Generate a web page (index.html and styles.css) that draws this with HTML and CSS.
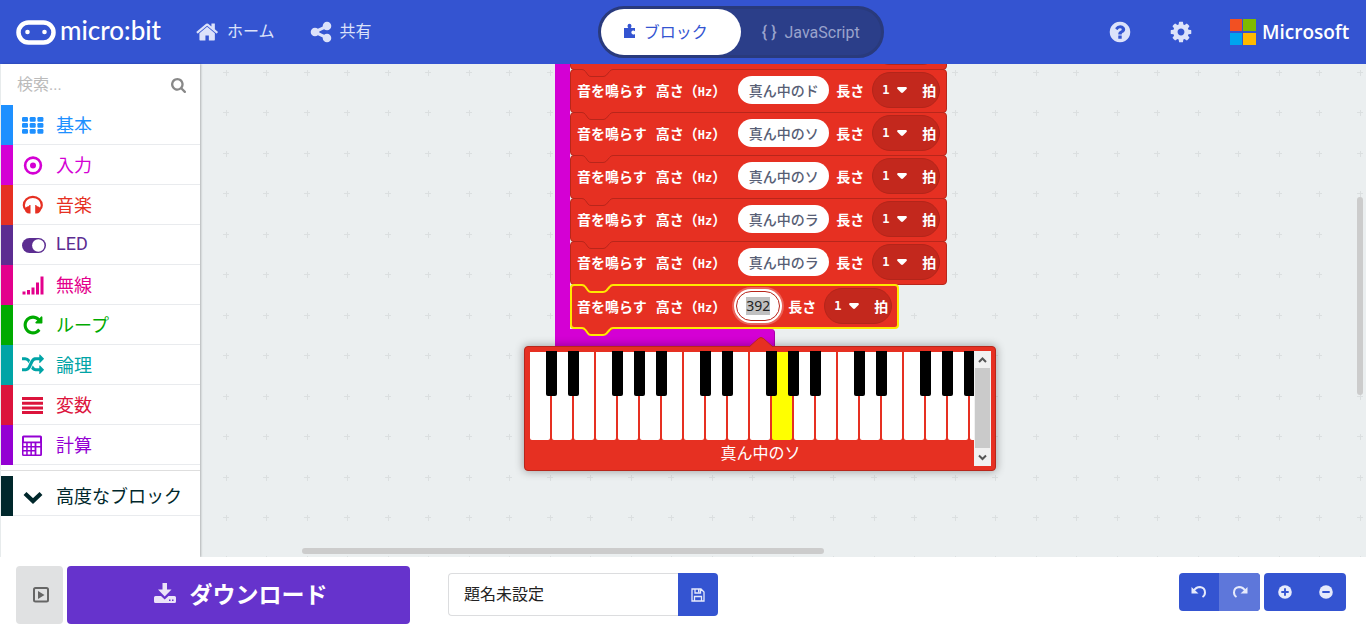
FILE: index.html
```html
<!DOCTYPE html>
<html lang="ja">
<head>
<meta charset="utf-8">
<meta name="viewport" content="width=device-width, initial-scale=1">
<title>micro:bit</title>
<link rel="stylesheet" href="styles.css">
</head>
<body>
<svg class="defs" aria-hidden="true">
  <symbol id="notch" viewBox="0 0 31 9"><path class="notch-fill" d="M0 0H31V1Q29 1 27.500 3L24.500 6.500Q23 8 21 8H9Q7 8 6 6.500L3.500 3Q2 1 0 1Z"/><path class="notch-line" d="M0 .5Q2 .5 3.500 2.500L6 6Q7 7.500 9 7.500H21Q23 7.500 24.500 6L27.500 2.500Q29 .5 31 .5"/></symbol>
  <symbol id="notch-selected" viewBox="0 0 31 10"><path class="notch-fill" d="M0 0H31V2L24 8H8L0 2Z"/><path fill="none" stroke="#ffe800" stroke-width="2" d="M0 1Q2 1 3.500 3L6 6.500Q7 8 9 8H21Q23 8 24.500 6.500L27.500 3Q29 1 31 1"/></symbol>
  <symbol id="caret" viewBox="0 0 10 6"><path fill="#fff" d="M1 0H9Q10.500 .5 9.500 2L6 5.500Q5 6.300 4 5.500L.5 2Q-.5 .5 1 0Z"/></symbol>
</svg>

<header class="topbar">
  <nav class="nav">
    <a class="brand" href="#">
      <svg width="40" height="25" viewBox="0 0 40 25" aria-hidden="true"><rect x="2.500" y="2.500" width="35" height="20" rx="10" fill="none" stroke="#fff" stroke-width="4.500"/><circle cx="11.500" cy="12" r="2.300" fill="#fff"/><circle cx="28.500" cy="12" r="2.300" fill="#fff"/></svg>
      <span>micro:bit</span>
    </a>
    <a class="nav-item" href="#">
      <svg width="24" height="24" viewBox="0 0 1792 1792" aria-hidden="true"><path fill="currentColor" d="M1408 992v480q0 26-19 45t-45 19h-384v-384h-256v384h-384q-26 0-45-19t-19-45v-480q0-1 .5-3t.5-3l575-474 575 474q1 2 1 6zm223-69l-62 74q-8 9-21 11h-3q-13 0-21-7l-692-577-692 577q-12 8-24 7-13-2-21-11l-62-74q-8-10-7-23.500t11-21.500l719-599q32-26 76-26t76 26l244 204v-195q0-14 9-23t23-9h192q14 0 23 9t9 23v408l219 182q10 8 11 21.500t-7 23.500z"/></svg>
      ホーム
    </a>
    <a class="nav-item" href="#">
      <svg width="24" height="24" viewBox="0 0 1792 1792" aria-hidden="true"><path fill="currentColor" d="M1344 1024q133 0 226.500 93.500t93.500 226.500-93.500 226.500-226.500 93.500-226.500-93.500-93.500-226.500q0-12 2-34l-360-180q-92 86-218 86-133 0-226.500-93.500t-93.500-226.500 93.500-226.500 226.500-93.500q126 0 218 86l360-180q-2-22-2-34 0-133 93.500-226.500t226.500-93.500 226.500 93.500 93.500 226.500-93.500 226.500-226.500 93.500q-126 0-218-86l-360 180q2 22 2 34t-2 34l360 180q92-86 218-86z"/></svg>
      共有
    </a>
  </nav>
  <div class="toggle">
    <button class="toggle-item active" type="button">
      <svg width="12" height="16" viewBox="0 0 12 16" aria-hidden="true"><path fill="currentColor" d="M0 5H4.300Q3.500 4 3.500 2.700Q3.700 .8 5.500 .8Q7.300 .8 7.500 2.700Q7.500 4 6.700 5H11V8.300Q10 7.300 8.800 7.600Q7.300 8.200 7.300 9.600Q7.500 11.200 9 11.500Q10 11.700 11 11V15H0Z"/></svg>
      ブロック
    </button>
    <button class="toggle-item" type="button"><span class="braces">{ }</span>JavaScript</button>
  </div>
  <div class="tools">
    <button class="tool" type="button" aria-label="ヘルプ"><svg width="24" height="24" viewBox="0 0 1792 1792" aria-hidden="true"><path fill="currentColor" d="M1024 1376v-192q0-14-9-23t-23-9h-192q-14 0-23 9t-9 23v192q0 14 9 23t23 9h192q14 0 23-9t9-23zm256-672q0-88-55.500-163t-138.500-116-170-41q-243 0-371 213-15 24 8 42l132 100q7 6 19 6 16 0 25-12 53-68 86-92 34-24 86-24 48 0 85.500 26t37.500 59q0 38-20 61t-68 45q-63 28-115.500 86.500t-52.500 125.500v36q0 14 9 23t23 9h192q14 0 23-9t9-23q0-19 21.500-49.500t54.500-49.500q32-18 49-28.500t46-35 44.500-48 28-60.500 12.500-81zm384 192q0 209-103 385.500t-279.500 279.500-385.500 103-385.500-103-279.500-279.500-103-385.500 103-385.500 279.500-279.500 385.500-103 385.500 103 279.500 279.500 103 385.500z"/></svg></button>
    <button class="tool" type="button" aria-label="設定"><svg width="24" height="24" viewBox="0 0 1792 1792" aria-hidden="true"><path fill="currentColor" d="M1152 896q0-106-75-181t-181-75-181 75-75 181 75 181 181 75 181-75 75-181zm512-109v222q0 12-8 23t-20 13l-185 28q-19 54-39 91 35 50 107 138 10 12 10 25t-9 23q-27 37-99 108t-94 71q-12 0-26-9l-138-108q-44 23-91 38-16 136-29 186-7 28-36 28h-222q-14 0-24.500-8.500t-11.500-21.500l-28-184q-49-16-90-37l-141 107q-10 9-25 9-14 0-25-11-126-114-165-168-7-10-7-23 0-12 8-23 15-21 51-66.500t54-70.500q-27-50-41-99l-183-27q-13-2-21-12.500t-8-23.500v-222q0-12 8-23t19-13l186-28q14-46 39-92-40-57-107-138-10-12-10-24 0-10 9-23 26-36 98.500-107.500t94.500-71.500q13 0 26 10l138 107q44-23 91-38 16-136 29-186 7-28 36-28h222q14 0 24.500 8.500t11.500 21.500l28 184q49 16 90 37l142-107q9-9 24-9 13 0 25 10 129 119 165 170 7 8 7 22 0 12-8 23-15 21-51 66.500t-54 70.500q26 50 41 98l183 28q13 2 21 12.500t8 23.500z"/></svg></button>
    <a class="vendor" href="#">
      <svg width="26" height="26" viewBox="0 0 26 26" aria-hidden="true"><path fill="#f25022" d="M0 0h12v12H0z"/><path fill="#7fba00" d="M13 0h13v12H13z"/><path fill="#00a4ef" d="M0 14h12v12H0z"/><path fill="#ffb900" d="M13 14h13v12H13z"/></svg>
      <span>Microsoft</span>
    </a>
  </div>
</header>

<main class="editor">
  <aside class="toolbox">
    <label class="search">
      <input type="text" placeholder="検索..." aria-label="検索">
      <svg width="15" height="15" viewBox="64 128 1664 1664" aria-hidden="true"><path fill="#888" d="M1216 832q0-185-131.500-316.500t-316.500-131.500-316.500 131.500-131.500 316.500 131.500 316.500 316.500 131.500 316.500-131.500 131.500-316.500zm512 832q0 52-38 90t-90 38q-54 0-90-38l-343-342q-179 124-399 124-143 0-273.500-55.500t-225-150-150-225-55.500-273.500 55.500-273.500 150-225 225-150 273.500-55.500 273.500 55.500 225 150 150 225 55.500 273.500q0 220-124 399l343 343q37 37 37 90z"/></svg>
    </label>
    <button class="category basic" type="button"><svg width="24" height="24" viewBox="0 0 24 24" aria-hidden="true"><g fill="currentColor"><rect x="0" y="4" width="6" height="4.700" rx="1.200"/><rect x="7.700" y="4" width="6" height="4.700" rx="1.200"/><rect x="15.400" y="4" width="6" height="4.700" rx="1.200"/><rect x="0" y="10" width="6" height="4.700" rx="1.200"/><rect x="7.700" y="10" width="6" height="4.700" rx="1.200"/><rect x="15.400" y="10" width="6" height="4.700" rx="1.200"/><rect x="0" y="16" width="6" height="4.700" rx="1.200"/><rect x="7.700" y="16" width="6" height="4.700" rx="1.200"/><rect x="15.400" y="16" width="6" height="4.700" rx="1.200"/></g></svg>基本</button>
    <button class="category input" type="button"><svg width="24" height="24" viewBox="0 0 24 24" aria-hidden="true"><circle cx="11" cy="12.500" r="7.900" fill="none" stroke="currentColor" stroke-width="2.600"/><circle cx="11" cy="12.500" r="3" fill="currentColor"/></svg>入力</button>
    <button class="category music" type="button"><svg width="24" height="24" viewBox="0 0 24 24" aria-hidden="true"><path d="M4 17Q1.800 15 1.800 12.300A9 8.500 0 0 1 19.800 12.300Q19.800 15 17.600 17" fill="none" stroke="currentColor" stroke-width="2.200"/><path fill="currentColor" d="M8.500 12V20.500H7.200Q3 20 3 16.700Q3.300 13.500 7.200 13V12ZM13.200 12H14.500V13Q18.500 13.500 18.700 16.700Q18.500 20 14.500 20.500H13.200Z"/></svg>音楽</button>
    <button class="category led" type="button"><svg width="25" height="24" viewBox="0 0 25 24" aria-hidden="true"><rect x="0" y="5" width="24" height="15" rx="7.500" fill="currentColor"/><circle cx="16.300" cy="12.500" r="6.200" fill="#fff"/></svg>LED</button>
    <button class="category radio" type="button"><svg width="24" height="24" viewBox="0 0 24 24" aria-hidden="true"><path fill="currentColor" d="M.5 18.500h3v3h-3zM5 17h3v4.500H5zM9.500 14.500h3v7h-3zM14 9.500h3v12h-3zM18.500 3.500h3v18h-3z"/></svg>無線</button>
    <button class="category loops" type="button"><svg width="22" height="22" viewBox="0 0 1792 1792" aria-hidden="true"><path fill="currentColor" d="M1664 256v448q0 26-19 45t-45 19h-448q-42 0-59-40-17-39 14-69l138-138q-148-137-349-137-104 0-198.500 40.500t-163.500 109.500-109.500 163.500-40.500 198.500 40.500 198.500 109.500 163.500 163.500 109.500 198.500 40.500q119 0 225-52t179-147q7-10 23-12 15 0 25 9l137 138q9 8 9.500 20.500t-7.500 22.500q-109 132-264 204.500t-327 72.500q-156 0-298-61t-245-164-164-245-61-298 61-298 164-245 245-164 298-61q147 0 284.500 55.500t244.500 156.500l130-129q29-31 70-14 39 17 39 59z"/></svg>ループ</button>
    <button class="category logic" type="button"><svg width="22" height="22" viewBox="0 0 1792 1792" aria-hidden="true"><path fill="currentColor" d="M666 481q-60 92-137 273-22-45-37-72.500t-40.500-63.500-51-56.500-63-35-81.500-14.500h-224q-14 0-23-9t-9-23v-192q0-14 9-23t23-9h224q250 0 410 225zm1126 799q0 14-9 23l-320 320q-9 9-23 9-13 0-22.500-9.500t-9.500-22.500v-192q-32 0-85 .5t-81 1-73-1-71-5-64-10.500-63-18.500-58-28.500-59-40-55-53.500-56-69.500q59-93 136-273 22 45 37 72.500t40.500 63.500 51 56.500 63 35 81.500 14.500h256v-192q0-14 9-23t23-9q12 0 24 10l319 319q9 9 9 23zm0-896q0 14-9 23l-320 320q-9 9-23 9-13 0-22.500-9.500t-9.500-22.500v-192h-256q-48 0-87 15t-69 45-51 61.500-45 77.500q-32 62-78 171-29 66-49.500 111t-54 105-64 100-74 83-90 68.500-106.500 42-128 16.500h-224q-14 0-23-9t-9-23v-192q0-14 9-23t23-9h224q48 0 87-15t69-45 51-61.500 45-77.500q32-62 78-171 29-66 49.500-111t54-105 64-100 74-83 90-68.500 106.500-42 128-16.500h256v-192q0-14 9-23t23-9q12 0 24 10l319 319q9 9 9 23z"/></svg>論理</button>
    <button class="category variables" type="button"><svg width="24" height="24" viewBox="0 0 24 24" aria-hidden="true"><path fill="currentColor" d="M0 4h21v3H0zM0 8.700h21v3H0zM0 13.400h21v3H0zM0 18h21v3H0z"/></svg>変数</button>
    <button class="category math" type="button"><svg width="24" height="24" viewBox="1 0 24 24" aria-hidden="true"><path fill="currentColor" fill-rule="evenodd" d="M2.500 2.500H19.500Q21 2.500 21 4V21.500Q21 23 19.500 23H2.500Q1 23 1 21.500V4Q1 2.500 2.500 2.500ZM3 4.500V8.500H19V4.500ZM2.500 10.200V13h2.700v-2.800ZM6.700 10.200V13h2.700v-2.800ZM10.900 10.200V13h2.700v-2.800ZM15.400 10.200V13h3.800v-2.800ZM2.500 14.400v2.700h2.700v-2.700ZM6.700 14.400v2.700h2.700v-2.700ZM10.900 14.400v2.700h2.700v-2.700ZM15.400 14.400v7h3.800v-7ZM2.500 18.600v2.800h2.700v-2.800ZM6.700 18.600v2.800h2.700v-2.800ZM10.900 18.600v2.800h2.700v-2.800Z"/></svg>計算</button>
    <hr class="divider">
    <button class="category advanced" type="button"><svg width="24" height="24" viewBox="0 0 24 24" aria-hidden="true"><path d="M3 9.500L11 17L19 9.500" fill="none" stroke="currentColor" stroke-width="4.200"/></svg>高度なブロック</button>
  </aside>

  <section class="canvas" aria-label="ワークスペース">
    <svg class="grid" width="100%" height="100%" aria-hidden="true">
      <defs><pattern id="crosses" width="81" height="81" x="5" y="-12" patternUnits="userSpaceOnUse"><path stroke="#dbdfe0" d="M18 20.500h6M21.500 18v6M58 20.500h6M61.500 18v6M18 60.500h6M21.500 58v6M58 60.500h6M61.500 58v6"/></pattern></defs>
      <rect width="100%" height="100%" fill="url(#crosses)"/>
    </svg>

    <div class="script">
      <div class="stack">
        <div class="block above" aria-hidden="true"><span class="beats"></span></div>
        <div class="block"><svg class="notch" width="31" height="9"><use href="#notch"/></svg><span class="verb">音を鳴らす</span><span class="pitch">高さ（<b>Hz</b>）</span><input class="note" type="text" value="真ん中のド" aria-label="高さ"><span>長さ</span><label class="beats"><select><option>1</option></select><svg width="10" height="6"><use href="#caret"/></svg><span>拍</span></label></div>
        <div class="block"><svg class="notch" width="31" height="9"><use href="#notch"/></svg><span class="verb">音を鳴らす</span><span class="pitch">高さ（<b>Hz</b>）</span><input class="note" type="text" value="真ん中のソ" aria-label="高さ"><span>長さ</span><label class="beats"><select><option>1</option></select><svg width="10" height="6"><use href="#caret"/></svg><span>拍</span></label></div>
        <div class="block"><svg class="notch" width="31" height="9"><use href="#notch"/></svg><span class="verb">音を鳴らす</span><span class="pitch">高さ（<b>Hz</b>）</span><input class="note" type="text" value="真ん中のソ" aria-label="高さ"><span>長さ</span><label class="beats"><select><option>1</option></select><svg width="10" height="6"><use href="#caret"/></svg><span>拍</span></label></div>
        <div class="block"><svg class="notch" width="31" height="9"><use href="#notch"/></svg><span class="verb">音を鳴らす</span><span class="pitch">高さ（<b>Hz</b>）</span><input class="note" type="text" value="真ん中のラ" aria-label="高さ"><span>長さ</span><label class="beats"><select><option>1</option></select><svg width="10" height="6"><use href="#caret"/></svg><span>拍</span></label></div>
        <div class="block"><svg class="notch" width="31" height="9"><use href="#notch"/></svg><span class="verb">音を鳴らす</span><span class="pitch">高さ（<b>Hz</b>）</span><input class="note" type="text" value="真ん中のラ" aria-label="高さ"><span>長さ</span><label class="beats"><select><option>1</option></select><svg width="10" height="6"><use href="#caret"/></svg><span>拍</span></label></div>
        <div class="block selected"><svg class="notch" width="31" height="10"><use href="#notch-selected"/></svg><span class="verb">音を鳴らす</span><span class="pitch">高さ（<b>Hz</b>）</span><label class="editing"><input type="text" value="392" aria-label="高さ"></label><span>長さ</span><label class="beats"><select><option>1</option></select><svg width="10" height="6"><use href="#caret"/></svg><span>拍</span></label><svg class="notch tab" width="31" height="10"><use href="#notch-selected"/></svg></div>
      </div>
      <div class="foot"></div>
    </div>

    <div class="piano">
      <svg class="pointer" width="24" height="11" viewBox="0 0 24 11" aria-hidden="true"><path fill="#e63022" d="M0 11V10.500L9.500 1.500Q12 -.5 14.500 1.500L24 10.500V11Z"/><path fill="none" stroke="#b8261b" d="M0 10L9.500 1.500Q12 -.5 14.500 1.500L24 10"/></svg>
      <div class="keys">
        <div class="key"><button class="white"></button><button class="black"></button></div>
        <div class="key"><button class="white"></button><button class="black"></button></div>
        <div class="key"><button class="white"></button></div>
        <div class="key"><button class="white"></button><button class="black"></button></div>
        <div class="key"><button class="white"></button><button class="black"></button></div>
        <div class="key"><button class="white"></button><button class="black"></button></div>
        <div class="key"><button class="white"></button></div>
        <div class="key"><button class="white"></button><button class="black"></button></div>
        <div class="key"><button class="white"></button><button class="black"></button></div>
        <div class="key"><button class="white"></button></div>
        <div class="key"><button class="white"></button><button class="black"></button></div>
        <div class="key"><button class="white pressed"></button><button class="black"></button></div>
        <div class="key"><button class="white"></button><button class="black"></button></div>
        <div class="key"><button class="white"></button></div>
        <div class="key"><button class="white"></button><button class="black"></button></div>
        <div class="key"><button class="white"></button><button class="black"></button></div>
        <div class="key"><button class="white"></button></div>
        <div class="key"><button class="white"></button><button class="black"></button></div>
        <div class="key"><button class="white"></button><button class="black"></button></div>
        <div class="key"><button class="white"></button><button class="black"></button></div>
        <div class="key"><button class="white"></button></div>
      </div>
      <div class="note-name">真ん中のソ</div>
      <div class="scroller">
        <svg width="17" height="17" viewBox="0 0 17 17" aria-hidden="true"><path d="M5 11L8.500 7.500L12 11" fill="none" stroke="#555" stroke-width="2"/></svg>
        <div class="thumb"></div>
        <svg width="17" height="18" viewBox="0 0 17 18" aria-hidden="true"><path d="M5 7.500L8.500 11L12 7.500" fill="none" stroke="#555" stroke-width="2"/></svg>
      </div>
    </div>
    <div class="bar-v"></div>
    <div class="bar-h"></div>
  </section>
</main>

<footer class="bottombar">
  <button class="simulator" type="button" aria-label="シミュレーター"><svg width="16" height="16" viewBox="0 0 16 16" aria-hidden="true"><rect x="1" y="1" width="14" height="13.500" rx="1.500" fill="none" stroke="#666" stroke-width="2"/><path fill="#666" d="M5 4L11.500 8L5 12Z"/></svg></button>
  <button class="download" type="button"><svg width="22" height="22" viewBox="0 0 22 22" aria-hidden="true"><path fill="#ebe3f8" fill-rule="evenodd" d="M8.500 1h4.500v6.500h4.500L10.700 14.500L4 7.500h4.500ZM1.500 14H7L10.700 17.500L14.500 14H20.500Q22 14 22 15.500V19.500Q22 21 20.500 21H1.500Q0 21 0 19.500V15.500Q0 14 1.500 14ZM15 17.500v1.500h1.500v-1.500ZM18 17.500v1.500h1.500v-1.500Z"/></svg>ダウンロード</button>
  <div class="project">
    <input type="text" value="題名未設定" aria-label="プロジェクト名">
    <button type="button" aria-label="保存"><svg width="14" height="14" viewBox="0 0 14 14" aria-hidden="true"><path d="M1 1H10L13 4V13H1ZM3.500 13V8.500H10.500V13M4 1V5H9.500V1" fill="none" stroke="#e6eafb" stroke-width="1.300"/><path fill="#e6eafb" d="M7 1h1.500v3.500H7z"/></svg></button>
  </div>
  <div class="group push">
    <button class="undo" type="button" aria-label="元に戻す"><svg width="16" height="14" viewBox="0 0 16 14" aria-hidden="true"><path d="M2.500 6Q5 2 9 2Q14 2.500 14 7.500Q14 10.500 11.500 12" fill="none" stroke="currentColor" stroke-width="2"/><path fill="currentColor" d="M.5 2V8.500H7.500Z"/></svg></button>
    <button class="faded" type="button" aria-label="やり直し"><svg width="16" height="14" viewBox="0 0 16 14" aria-hidden="true"><path d="M13.500 6Q11 2 7 2Q2 2.500 2 7.500Q2 10.500 4.500 12" fill="none" stroke="currentColor" stroke-width="2"/><path fill="currentColor" d="M15.500 2V8.500H8.500Z"/></svg></button>
  </div>
  <div class="group">
    <button type="button" aria-label="拡大"><svg width="14" height="14" viewBox="0 0 14 14" aria-hidden="true"><circle cx="7" cy="7" r="6.800" fill="currentColor"/><path d="M3.300 7h7.400M7 3.300v7.400" stroke="#3454d1" stroke-width="1.900"/></svg></button>
    <button type="button" aria-label="縮小"><svg width="14" height="14" viewBox="0 0 14 14" aria-hidden="true"><circle cx="7" cy="7" r="6.800" fill="currentColor"/><path d="M3.300 7h7.400" stroke="#3454d1" stroke-width="1.900"/></svg></button>
  </div>
</footer>
</body>
</html>
```

FILE: styles.css
```css
* { box-sizing: border-box; }

body {
  margin: 0;
  height: 100vh;
  display: flex;
  flex-direction: column;
  overflow: hidden;
  background: #fff;
  font-family: Roboto, "Noto Sans CJK JP", sans-serif;
  font-size: 16px;
}

button, input, select {
  font: inherit;
  color: inherit;
  margin: 0;
  padding: 0;
  border: 0;
  background: none;
  outline: 0;
  border-radius: 0;
}

a { color: inherit; text-decoration: none; }
.defs { position: absolute; width: 0; height: 0; }

/* Header */
.topbar {
  flex: none;
  height: 64px;
  display: flex;
  align-items: center;
  justify-content: space-between;
  padding: 0 16px;
  background: #3454d1;
  color: #dce2fa;
}
.nav, .tools { display: flex; align-items: center; }
.brand {
  display: flex;
  align-items: center;
  gap: 4px;
  width: 163px;
  color: #fff;
  font-family: Lato, sans-serif;
  font-size: 26px;
  font-weight: 500;
  line-height: 32px;
}
.brand span { padding-bottom: 4px; }
.nav-item {
  display: flex;
  align-items: center;
  gap: 7px;
  padding: 0 17px;
  line-height: 24px;
}
.nav-item + .nav-item { padding-right: 20px; }
.toggle {
  display: flex;
  width: 286px;
  height: 52px;
  border: 3px solid #293a7c;
  border-radius: 26px;
  background: #2b3e89;
}
.toggle-item {
  flex: none;
  width: 50%;
  display: flex;
  align-items: center;
  justify-content: center;
  gap: 8px;
  border-radius: 23px;
  color: #9aa3cc;
}
.toggle-item.active { padding: 0 10px 2px 0; background: #fff; color: #3454d1; }
.braces { font-weight: 500; }
.tool {
  width: 61px;
  height: 48px;
  display: flex;
  align-items: center;
  justify-content: center;
}
.vendor {
  display: flex;
  align-items: center;
  gap: 6px;
  width: 120px;
  margin-left: 18px;
  color: #fff;
  font-family: "Open Sans", sans-serif;
  font-weight: 600;
  font-size: 19px;
}

/* Toolbox */
.editor { flex: 1; min-height: 0; display: flex; background: #ebeff0; }
.toolbox {
  flex: none;
  width: 199px;
  margin-left: 1px;
  background: #fff;
  box-shadow: 1px 0 2px rgba(0, 0, 0, .25);
  z-index: 1;
}
.search {
  display: flex;
  align-items: center;
  height: 41px;
  padding: 0 14px 0 16px;
}
.search input { flex: 1; min-width: 0; line-height: 24px; }
.search input::placeholder { color: #bbb; opacity: 1; }
.search svg { margin-top: 2px; }
.category {
  width: 100%;
  height: 40px;
  display: grid;
  grid-template-columns: 34px 1fr;
  align-items: center;
  padding: 0 0 3px 9px;
  border-left: 12px solid currentColor;
  background: linear-gradient(#e9ebee, #e9ebee) bottom / 100% 1px no-repeat;
  font-size: 18px;
  text-align: left;
}
.category svg { margin-top: 3px; }
.basic { color: #1e90ff; }
.input { color: #d400d4; }
.music { color: #e63022; }
.led { color: #5c2d91; }
.radio { color: #e3008c; }
.loops { color: #00aa00; }
.logic { color: #00a4a6; }
.variables { color: #dc143c; }
.math { color: #9400d3; }
.advanced { color: #00272b; }
.divider { height: 1px; margin: 5px 0; border: 0; background: #dedede; }

/* Block canvas */
.canvas { flex: 1; min-width: 0; position: relative; overflow: hidden; }
.grid { display: block; }
.script { position: absolute; left: 355px; top: -38px; }
.stack {
  display: flex;
  flex-direction: column;
  align-items: flex-start;
  border-left: 15px solid #d400d4;
}
.block {
  position: relative;
  height: 44px;
  display: flex;
  align-items: center;
  margin-bottom: -1px;
  padding: 0 6px 2px;
  border: 1px solid #b8261b;
  border-radius: 4px;
  background: #e63022;
  color: #fff;
  font-family: "Noto Sans CJK JP", sans-serif;
  font-size: 14px;
  font-weight: 700;
}
.block > span { white-space: nowrap; }
.block.above { align-self: stretch; justify-content: flex-end; }
.verb { margin-right: 9px; }
.pitch { margin-right: 12px; }
.block b, .beats select {
  font-family: "DejaVu Sans Mono", monospace;
  font-size: 12px;
}
.notch { position: absolute; left: 11px; top: -1px; }
.notch-fill { fill: #e63022; }
.notch-line { fill: none; stroke: #b8261b; }
.note {
  width: 91px;
  height: 28px;
  margin-right: 7px;
  border-radius: 14px;
  background: #fff;
  color: #575e75;
  font-weight: 500;
  text-align: center;
}
.beats {
  width: 68px;
  height: 36px;
  display: flex;
  align-items: center;
  margin-left: 8px;
  padding: 0 3px 0 9px;
  border: 1px solid #b3251a;
  border-radius: 18px;
  background: #c3281d;
}
.beats select { appearance: none; width: 15px; }
.beats span { margin-left: auto; }
.block.selected {
  height: 45px;
  margin-bottom: 0;
  padding: 0 5px 2px;
  border: 2px solid #ffe800;
  z-index: 1;
}
.selected .notch { left: 10px; top: -2px; }
.selected .notch.tab { top: auto; bottom: -10px; }
.editing {
  width: 44px;
  height: 30px;
  display: flex;
  align-items: center;
  justify-content: center;
  margin: 0 8px 0 -2px;
  border: 1px solid #b8261b;
  border-radius: 15px;
  background: #fff;
  box-shadow: 0 0 0 2px #fff, 0 0 0 4px rgba(255, 255, 255, .25);
}
.editing input {
  width: 24px;
  height: 18px;
  background: #c0c0c0;
  color: #222;
  font-family: "Noto Sans", sans-serif;
  font-size: 14px;
  font-weight: 400;
  text-align: center;
}
.foot {
  width: 220px;
  height: 20px;
  border-right: 1px solid #aa00aa;
  border-radius: 0 4px 0 0;
  background: #d400d4;
}

/* Piano popup */
.piano {
  position: absolute;
  left: 324px;
  top: 282px;
  width: 472px;
  display: grid;
  grid-template-columns: 1fr 17px;
  grid-template-rows: 89px 26px;
  padding: 4px;
  padding-left: 5px;
  border: 1px solid #b8261b;
  border-radius: 4px;
  background: #e63022;
  box-shadow: 0 0 8px 1px rgba(0, 0, 0, .3);
  z-index: 2;
}
.pointer { position: absolute; left: 224px; top: -10px; }
.keys { display: flex; gap: 2px; overflow: hidden; }
.key { position: relative; flex: none; width: 20px; padding-top: 1px; }
.white { display: block; width: 20px; height: 88px; background: #fff; border-radius: 0 0 2px 2px; }
.white.pressed { background: #ff0; }
.black {
  position: absolute;
  left: 16px;
  top: 0;
  width: 11px;
  height: 45px;
  background: #000;
  border-radius: 0 0 2px 2px;
  z-index: 1;
}
.note-name {
  grid-area: 2 / 1 / 3 / 3;
  color: #fff;
  line-height: 28px;
  text-align: center;
}
.scroller {
  grid-area: 1 / 2 / 3 / 3;
  display: flex;
  flex-direction: column;
  background: #f1f1f1;
}
.thumb { flex: 1; margin: 0 1px; background: #cacaca; }
.bar-v, .bar-h { position: absolute; border-radius: 3px; background: #ccc; }
.bar-v { right: 3px; top: 133px; width: 6px; height: 198px; }
.bar-h { left: 102px; bottom: 3px; width: 522px; height: 6px; }

/* Footer */
.bottombar {
  position: relative;
  z-index: 2;
  flex: none;
  height: 75px;
  display: flex;
  align-items: flex-start;
  padding: 9px 20px 0 16px;
  background: #fff;
}
.bottombar button { display: flex; align-items: center; justify-content: center; }
.simulator { width: 47px; height: 58px; border-radius: 4px; background: #e0e1e2; }
.bottombar .simulator { padding-left: 3px; }
.download {
  flex: 0 1 343px;
  height: 58px;
  gap: 14px;
  margin-left: 4px;
  border-radius: 4px;
  background: #6633cc;
  color: #fff;
  font-size: 23px;
  font-weight: 700;
}
.bottombar .download { padding: 0 0 4px 4px; }
.project { display: flex; height: 43px; margin: 7px 0 0 38px; }
.project input {
  width: 230px;
  padding: 0 15px 3px;
  border: 1px solid #dcdddf;
  border-right: 0;
  border-radius: 4px 0 0 4px;
  color: #222;
}
.project button { width: 40px; border-radius: 0 4px 4px 0; background: #3454d1; }
.group {
  display: flex;
  height: 38px;
  margin: 7px 0 0 4px;
  border-radius: 4px;
  overflow: hidden;
  background: #3454d1;
  color: #e6eafb;
}
.group.push { margin-left: auto; }
.group button { width: 41px; }
.group .undo { width: 40px; }
.group .faded { background: #5e77da; }
```
